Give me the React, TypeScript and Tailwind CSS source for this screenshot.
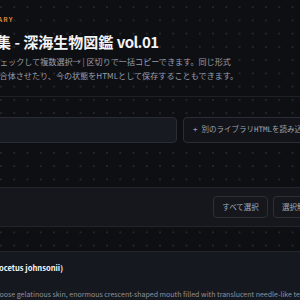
import React from "react";

export default function App() {
  return (
    <div className="w-[300px] h-[300px] overflow-hidden bg-[#0e0f13] bg-[radial-gradient(circle,#24262e_0.9px,transparent_1.2px)] bg-[length:13.25px_13.25px] bg-[position:-5.6px_0.5px] font-['Noto_Sans_CJK_JP','Noto_Sans',sans-serif]">
      <div className="-ml-[45px] w-[470px]">
        <header className="pt-[14px] pb-[13px] border-b border-[#1e2027]">
          <div className="text-[6.5px] leading-[10px] font-bold tracking-[0.16em] text-[#d2843a]">
            CARD LIBRARY
          </div>
          <h1 className="mt-[8px] -ml-[4px] text-[15px] leading-[20px] font-bold text-[#f2f3f5] whitespace-nowrap">
            カード集 - 深海生物図鑑 <span className="tracking-[-0.04em]">vol.01</span>
          </h1>
          <p className="mt-[3px] pl-[4.5px] text-[8.1px] leading-[14px] text-[#9a9ca6] whitespace-nowrap">
            カードをチェックして複数選択→ | 区切りで一括コピーできます。同じ形式
            <br />
            読み込んで合体させたり、今の状態をHTMLとして保存することもできます。
          </p>
        </header>

        <div className="mt-[20px] flex gap-[6px]">
          <div className="w-[222px] h-[26px] rounded-[4px] bg-[#181a21] border border-[#2a2c35]" />
          <div className="w-[200px] h-[26px] rounded-[4px] bg-[#131419] border border-[#2a2d36] flex items-center pl-[9px] gap-[4px] text-[7.5px] text-[#9fa2ab] whitespace-nowrap font-['DejaVu_Sans_Mono','Noto_Sans_CJK_JP',monospace]">
            <span>+</span>
            <span>別のライブラリHTMLを読み込む</span>
          </div>
        </div>

        <div className="mt-[44px] h-[40px] border-t border-b border-[#23252d] bg-[#15171d] flex items-center">
          <div className="w-[258px]" />
          <div className="flex gap-[5px] text-[7.5px] text-[#a4a7ae] whitespace-nowrap">
            <div className="h-[22px] w-[55px] rounded-[4px] border border-[#2c2f38] flex items-center justify-center">すべて選択</div>
            <div className="h-[22px] w-[48px] rounded-[4px] border border-[#2c2f38] flex items-center justify-center">選択解除</div>
            <div className="h-[22px] w-[70px] rounded-[4px] border border-[#2c2f38] flex items-center justify-center">まとめてコピー</div>
          </div>
        </div>

        <div className="mt-[24px] h-[60px] border-t border-[#23252d] bg-[#16181f] pt-[10px]">
          <div className="-ml-[54px] text-[7.6px] leading-[12px] font-bold text-[#f5f6f8] whitespace-nowrap">
            チョウチンアンコウ（Melanocetus johnsonii)
          </div>
          <div className="mt-[15px] pl-[21px] text-[7px] leading-[11px] text-[#8e919b] whitespace-nowrap">
            Black, loose gelatinous skin, enormous crescent-shaped mouth filled with translucent needle-like teeth.
          </div>
        </div>
      </div>
    </div>
  );
}
